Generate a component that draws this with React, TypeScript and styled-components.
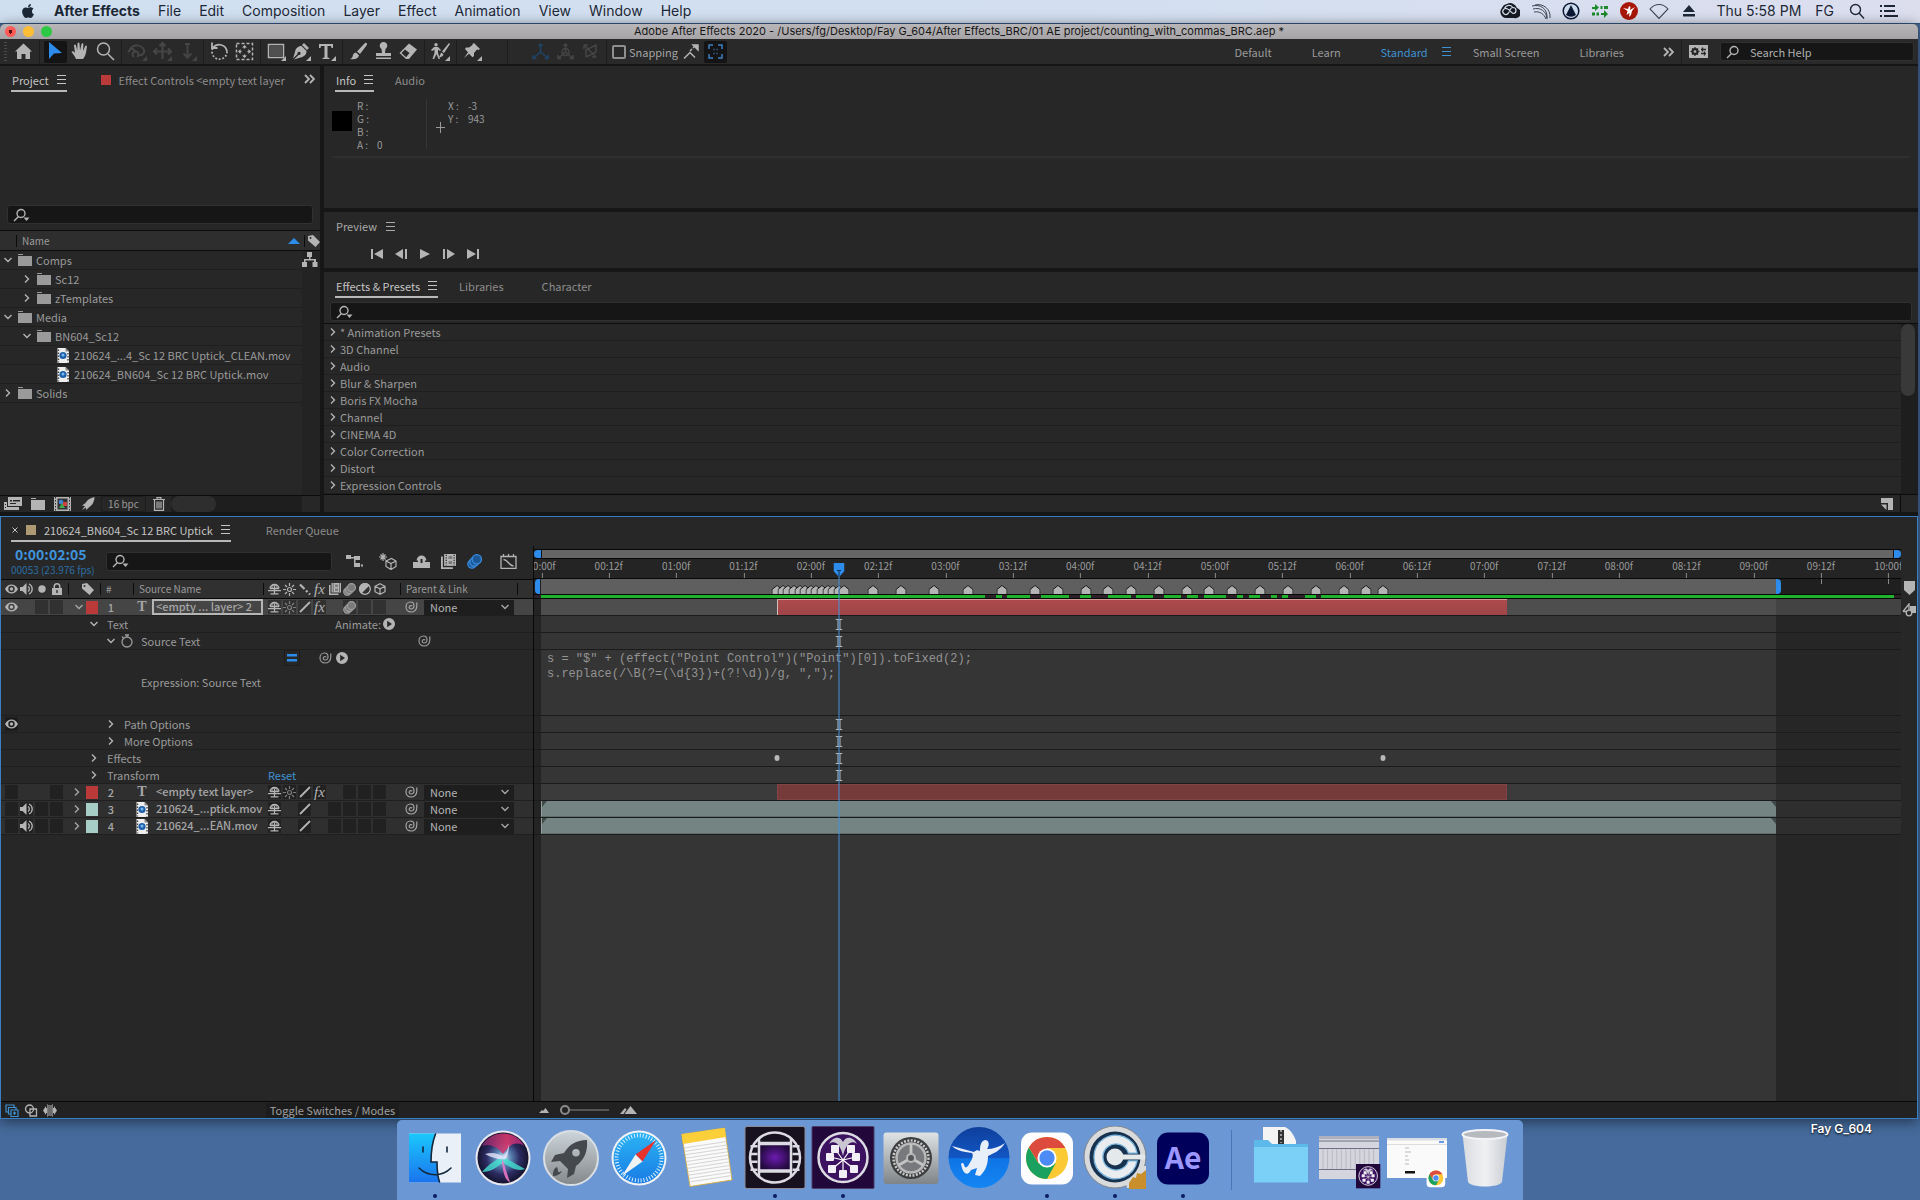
import React from "react";
import styled, { createGlobalStyle, css } from "styled-components";
import { FaApple } from "react-icons/fa";

/* ---------- theme ---------- */
const c = {
  panel: "#272727",
  gap: "#161616",
  line: "#1f1f1f",
  field: "#161616",
  text: "#9a9a9a",
  bright: "#c4c4c4",
  icon: "#b4b4b4",
  dim: "#454545",
  blue: "#2d8ceb",
  link: "#4091d2",
  red: "#b93a38",
};
const uiFont = `"Noto Sans CJK SC", "Noto Sans", sans-serif`;
const macFont = `Inter, Roboto, sans-serif`;

const Global = createGlobalStyle`
  * { box-sizing: border-box; }
  html, body, #root { margin: 0; height: 100%; }
  body { background: #456a9b; overflow: hidden; }
  button, input, select, textarea { font: inherit; color: inherit; margin: 0; padding: 0; border: 0; background: none; outline: none; }
  svg { display: block; flex: none; }
  ul { list-style: none; margin: 0; padding: 0; }
`;

/* ---------- shell ---------- */
const Desktop = styled.div`
  height: 100vh;
  min-height: 900px;
  display: flex;
  flex-direction: column;
  background: #456a9b;
  font: 11px/16px ${uiFont};
  color: ${c.text};
  white-space: nowrap;
`;
const MenuBar = styled.header`
  height: 24px;
  flex: none;
  display: flex;
  align-items: center;
  justify-content: space-between;
  padding: 0 22px 2px 20px;
  background: linear-gradient(90deg, #d0dff0, #d3dff0 60%, #dcdeee);
  border-bottom: 1px solid #33557f;
  color: #1d2836;
  font: 14px/20px ${macFont};
`;
const Menus = styled.nav`
  display: flex;
  align-items: center;
  gap: 18px;
`;
const MenuButton = styled.button<{ $bold?: boolean }>`
  font-weight: ${(p) => (p.$bold ? 700 : 400)};
`;
const StatusItems = styled.div`
  display: flex;
  align-items: center;
  gap: 11px;
`;
const Clock = styled.span`
  margin: 0 3px 0 8px;
`;
const StatusButton = styled.button`
  margin-right: 4px;
`;
const AppWindow = styled.div`
  flex: 1;
  min-height: 0;
  display: flex;
  flex-direction: column;
  margin-right: 2px;
  background: ${c.gap};
  border-radius: 5px 5px 0 0;
  overflow: hidden;
  box-shadow: 0 2px 14px rgba(0, 0, 0, 0.55);
`;
const TitleBar = styled.div`
  height: 15px;
  flex: none;
  display: grid;
  grid-template-columns: 1fr auto 1fr;
  align-items: center;
  padding: 0 5px;
  background: linear-gradient(#b9b6b9, #a5a3a5);
  color: #161616;
  font: 11px/15px ${macFont};
`;
const Lights = styled.div`
  display: flex;
  gap: 7px;
`;
const Light = styled.button<{ $color: string; $dot?: boolean }>`
  width: 11px;
  height: 11px;
  border-radius: 50%;
  background: ${(p) => (p.$dot ? `radial-gradient(circle, #5a0d08 0 2px, ${p.$color} 2px)` : p.$color)};
`;

/* ---------- toolbar ---------- */
const Toolbar = styled.div`
  height: 25px;
  flex: none;
  display: flex;
  align-items: center;
  background: #292929;
  color: ${c.icon};
`;
const Grip = styled.span`
  width: 3px;
  height: 20px;
  margin: 0 4px;
  background: repeating-linear-gradient(#4a4a4a 0 1px, transparent 1px 3px);
`;
const Tool = styled.button<{ $active?: boolean; $off?: boolean }>`
  width: ${(p) => (p.$active ? 23 : 25)}px;
  margin: ${(p) => (p.$active ? "0 1px" : "0")};
  height: 22px;
  display: grid;
  place-items: center;
  border-radius: 2px;
  background: ${(p) => (p.$active ? "#141414" : "transparent")};
  color: ${(p) => (p.$off ? c.dim : "inherit")};
`;
const Split = styled.span<{ $after?: number }>`
  width: 1px;
  height: 24px;
  margin: 0 ${(p) => p.$after ?? 3}px 0 3px;
  background: #1e1e1e;
`;
const AxisTools = styled.div`
  display: flex;
  align-items: center;
  margin-left: 19px;
  color: ${c.dim};
`;
const SnapLabel = styled.label`
  display: flex;
  align-items: center;
  gap: 3px;
  margin: 0 0 0 2px;
  color: #a4a4a4;
`;
const Check = styled.input`
  appearance: none;
  width: 14px;
  height: 14px;
  border: 2px solid #8f8f8f;
  border-radius: 2px;
`;
const Workspaces = styled.nav`
  display: flex;
  align-items: center;
  gap: 40px;
  margin-left: auto;
`;
const Workspace = styled.button<{ $on?: boolean }>`
  color: ${(p) => (p.$on ? c.link : c.text)};
  display: flex;
  align-items: center;
  gap: 14px;
  margin-right: ${(p) => (p.$on ? -18 : 0)}px;
`;
const WorkspaceEnd = styled.div`
  display: flex;
  align-items: center;
  gap: 4px;
  margin: 0 4px 0 39px;
`;
const Field = styled.label<{ $w?: number; $lead?: number }>`
  display: flex;
  align-items: center;
  gap: 7px;
  height: 19px;
  width: ${(p) => (p.$w ? `${p.$w}px` : "auto")};
  margin-left: ${(p) => p.$lead ?? 0}px;
  padding: 0 5px;
  background: ${c.field};
  border: 1px solid #303030;
  border-radius: 3px;
  color: ${c.icon};
  input { flex: 1; min-width: 0; width: 100%; height: 16px; }
  input::placeholder { color: #b0b0b0; opacity: 1; }
`;

/* ---------- upper panels ---------- */
const Upper = styled.div`
  flex: none;
  display: flex;
  gap: 4px;
  padding: 2px 0 4px;
`;
const Panel = styled.section<{ $h?: number }>`
  background: ${c.panel};
  display: flex;
  flex-direction: column;
  ${(p) => p.$h && css`height: ${p.$h}px;`}
`;
const ProjectPanel = styled(Panel)`
  width: 320px;
  flex: none;
`;
const RightStack = styled.div`
  flex: 1;
  min-width: 0;
  display: flex;
  flex-direction: column;
  gap: 4px;
`;
const Tabs = styled.div<{ $gap?: number }>`
  display: flex;
  align-items: flex-start;
  gap: ${(p) => p.$gap ?? 20}px;
  padding: 3px 11px 0;
  height: 28px;
  flex: none;
`;
const Tab = styled.button<{ $on?: boolean; $lead?: number }>`
  display: flex;
  align-items: center;
  gap: 8px;
  height: 23px;
  padding: 0 1px;
  margin-left: ${(p) => p.$lead ?? 0}px;
  color: ${(p) => (p.$on ? c.bright : "#8c8c8c")};
  border-bottom: 2px solid ${(p) => (p.$on ? "#b8b8b8" : "transparent")};
`;
const Swatch = styled.span<{ $color: string; $w?: number; $h?: number }>`
  flex: none;
  width: ${(p) => p.$w ?? 10}px;
  height: ${(p) => p.$h ?? 10}px;
  background: ${(p) => p.$color};
`;
const IconButton = styled.button<{ $lead?: number }>`
  display: grid;
  place-items: center;
  flex: none;
  min-height: 16px;
  color: ${c.icon};
  margin-left: ${(p) => p.$lead ?? 0}px;
`;
const TabOverflow = styled(IconButton)`
  height: 20px;
`;
const ProjectSearch = styled.div`
  padding: 111px 7px 6px;
`;
const ListHead = styled.div`
  height: 21px;
  flex: none;
  display: flex;
  align-items: center;
  border: solid #0c0c0c;
  border-width: 1px 0;
  background: #2e2e2e;
  padding-left: 16px;
  font-size: 10px;
`;
const HeadCell = styled.span`
  flex: 1;
  display: flex;
  align-items: center;
  justify-content: space-between;
  height: 12px;
  border-left: 1px solid #0c0c0c;
  padding: 0 4px 0 5px;
`;
const HeadIcon = styled.span`
  display: flex;
  align-items: center;
  height: 12px;
  border-left: 1px solid #0c0c0c;
  padding-left: 3px;
  color: ${c.icon};
`;
const TreeBody = styled.div`
  flex: 1;
  display: flex;
`;
const Tree = styled.ul`
  flex: 1;
`;
const TreeRow = styled.li<{ $depth: number }>`
  display: flex;
  align-items: center;
  gap: 4px;
  height: 19px;
  padding-left: ${(p) => 2 + p.$depth * 19}px;
  border-bottom: 1px solid ${c.line};
`;
const ChevronSlot = styled.button`
  width: 12px;
  height: 14px;
  flex: none;
  display: grid;
  place-items: center;
  color: ${c.icon};
`;
const TreeSide = styled.div`
  width: 18px;
  background: #232323;
  color: ${c.icon};
`;
const ProjectFoot = styled.div`
  display: flex;
  align-items: center;
  height: 17px;
  border-top: 1px solid #0c0c0c;
  color: ${c.icon};
`;
const FootTool = styled.button`
  width: 25px;
  height: 16px;
  display: grid;
  place-items: center;
`;
const Depth = styled.button`
  width: 45px;
  height: 16px;
  border: 1px solid #1d1d1d;
  border-radius: 2px;
  margin-left: 1px;
  font-size: 10px;
  line-height: 14px;
  color: ${c.text};
`;
const HScroll = styled.div`
  flex: 1;
  margin-right: 18px;
  height: 16px;
  background: #1e1e1e;
`;
const HThumb = styled.div`
  width: 45px;
  height: 16px;
  border-radius: 8px;
  background: #2e2e2e;
`;

const InfoBody = styled.div`
  display: flex;
  height: 64px;
  margin: 0 8px;
  border-bottom: 2px solid #2f2f2f;
  padding-top: 5px;
  font-size: 10px;
`;
const InfoList = styled.dl`
  margin: 0;
  display: grid;
  grid-template-columns: 20px auto;
  grid-auto-rows: 13px;
  align-content: start;
  line-height: 13px;
  dt, dd { margin: 0; }
`;
const Channels = styled.div`
  display: flex;
  gap: 5px;
  width: 95px;
  height: 50px;
  border-right: 1px solid #363636;
`;
const ColorBox = styled.span`
  width: 20px;
  height: 20px;
  margin-top: 12px;
  background: #000;
`;
const Cross = styled.span`
  padding: 23px 3px 0 9px;
`;
const PreviewTitle = styled.div`
  display: flex;
  align-items: center;
  gap: 9px;
  height: 20px;
  margin: 4px 0 0 12px;
  color: #aaa;
`;
const Transport = styled.div`
  display: flex;
  padding: 7px 0 0 41px;
  button { width: 24px; height: 22px; }
`;
const FxSearch = styled.div`
  padding: 2px 6px 2px;
`;
const FxBody = styled.div`
  display: flex;
  height: 172px;
  border: solid #0c0c0c;
  border-width: 1px 0;
`;
const FxList = styled.ul`
  flex: 1;
`;
const FxRow = styled.li`
  display: flex;
  align-items: center;
  gap: 1px;
  height: 17px;
  padding-left: 3px;
  border-bottom: 1px solid ${c.line};
`;
const VScroll = styled.div`
  width: 17px;
  background: #1e1e1e;
`;
const VThumb = styled.div`
  width: 14px;
  height: 72px;
  border-radius: 7px;
  background: #393939;
`;
const FxFoot = styled.div`
  display: flex;
  justify-content: flex-end;
  align-items: center;
  height: 17px;
  margin-right: 17px;
  padding-right: 7px;
  border-right: 1px solid #0c0c0c;
  color: ${c.icon};
`;

/* ---------- timeline ---------- */
const Timeline = styled.section`
  flex: 1;
  min-height: 0;
  display: flex;
  flex-direction: column;
  background: ${c.panel};
  border: 1px solid #3a7fc4;
`;
const TimelineTabs = styled(Tabs)`
  gap: 34px;
  height: 29px;
  padding: 2px 10px 0;
`;
const TimelineBody = styled.div`
  flex: 1;
  min-height: 0;
  display: flex;
`;
const Outline = styled.div`
  width: 533px;
  flex: none;
  border-right: 1px solid #080808;
`;
const Controls = styled.div`
  display: flex;
  align-items: center;
  height: 33px;
  padding: 0 0 3px 10px;
  color: ${c.icon};
`;
const Timecode = styled.div`
  width: 95px;
  line-height: 14px;
  font-size: 10px;
  color: #2b6ea5;
  b { display: block; padding-left: 4px; font-size: 14px; line-height: 17px; color: #3f94dd; font-weight: 700; }
`;
const ControlTools = styled.div`
  display: flex;
  align-items: center;
  gap: 11px;
  margin-left: 14px;
`;
const OutlineHead = styled.div`
  display: flex;
  align-items: center;
  height: 20px;
  padding-left: 4px;
  border: solid #080808;
  border-width: 1px 0;
  background: #303030;
  color: ${c.icon};
  font-size: 10px;
`;
const OutlineCell = styled.div<{ $w: number; $pad?: number }>`
  display: flex;
  align-items: center;
  width: ${(p) => p.$w}px;
  height: 12px;
  padding-left: ${(p) => p.$pad ?? 5}px;
  border-left: 1px solid #0c0c0c;
  color: ${c.text};
`;
const Cells = styled.div`
  display: grid;
  grid-auto-flow: column;
  grid-auto-columns: 13px;
  column-gap: 2px;
  align-items: center;
`;
const AvCells = styled(Cells)<{ $w?: number }>`
  width: ${(p) => p.$w ?? 63}px;
  flex: none;
`;
const CellBox = styled.button<{ $box?: boolean }>`
  width: 13px;
  height: 14px;
  display: grid;
  place-items: center;
  overflow: visible;
  color: ${c.icon};
  background: ${(p) => (p.$box ? "rgba(0,0,0,.28)" : "transparent")};
`;
const LayerRow = styled.div<{ $selected?: boolean }>`
  display: grid;
  grid-template-columns: 60px 20px 14px 24px 29px 112px 124px 36px 90px;
  align-items: center;
  height: 17px;
  padding-left: 4px;
  border-bottom: 1px solid ${c.line};
  background: ${(p) => (p.$selected ? "#454545" : "#2f2f2f")};
  color: #a6a6a6;
  font-weight: 500;
`;
const Slot = styled.div<{ $end?: number; $center?: boolean; $start?: number }>`
  display: flex;
  align-items: center;
  justify-content: ${(p) => (p.$end !== undefined ? "flex-end" : p.$center ? "center" : "flex-start")};
  padding-right: ${(p) => p.$end ?? 0}px;
  padding-left: ${(p) => p.$start ?? 0}px;
`;
const LayerName = styled.span<{ $boxed?: boolean }>`
  height: 16px;
  line-height: 15px;
  padding: 0 4px;
  margin-right: 1px;
  box-shadow: ${(p) => (p.$boxed ? "inset 0 0 0 2px #b5b5b5" : "none")};
`;
const ParentPick = styled.label`
  position: relative;
  display: block;
  height: 15px;
  background: #1e1e1e;
  font-weight: 400;
  svg { position: absolute; right: 4px; top: 3px; pointer-events: none; }
  select { display: block; appearance: none; width: 100%; height: 14px; padding-left: 6px; line-height: 14px; color: #b4b4b4; }
`;
const PropRow = styled.div`
  display: flex;
  align-items: center;
  height: 17px;
  padding-left: 4px;
  border-bottom: 1px solid ${c.line};
`;
const PropName = styled.div<{ $depth: number }>`
  display: flex;
  align-items: center;
  gap: 3px;
  flex: none;
  width: 203px;
  padding-left: ${(p) => 6 + p.$depth * 17}px;
  span { margin-left: 4px; }
`;
const PropValues = styled.div<{ $end?: boolean }>`
  display: flex;
  align-items: center;
  gap: 1px;
  width: 128px;
  margin-right: 20px;
  justify-content: ${(p) => (p.$end ? "flex-end" : "flex-start")};
`;
const Reset = styled.button`
  color: ${c.link};
`;
const ExprBlock = styled.div`
  height: 66px;
  border-bottom: 1px solid ${c.line};
  padding-left: 140px;
`;
const ExprTools = styled.div`
  display: flex;
  align-items: center;
  gap: 2px;
  height: 16px;
  padding-left: 143px;
  margin-bottom: 8px;
`;
const EqualButton = styled.button`
  width: 16px;
  height: 16px;
  display: grid;
  place-items: center;
  border: 1px solid #1d1d1d;
  margin-right: 15px;
  color: ${c.blue};
`;

const Tracks = styled.div`
  position: relative;
  flex: 1;
  min-width: 0;
  display: flex;
  flex-direction: column;
  overflow: hidden;
`;
const NavBar = styled.div`
  height: 10px;
  margin-top: 3px;
  display: flex;
  border: solid #080808;
  border-width: 1px 0;
`;
const NavFill = styled.div`
  flex: 1;
  background: #666;
  border: solid #111;
  border-width: 0 1px;
`;
const NavCap = styled.button<{ $right?: boolean }>`
  width: 7px;
  background: ${c.blue};
  border-radius: ${(p) => (p.$right ? "0 6px 6px 0" : "6px 0 0 6px")};
`;
const Ruler = styled.div`
  position: relative;
  height: 19px;
  overflow: hidden;
  background: #242424;
`;
const Tick = styled.span`
  position: absolute;
  top: 0;
  height: 19px;
  font-size: 10px;
  line-height: 14px;
  transform: translateX(-50%);
  &::after { content: ""; position: absolute; left: 50%; top: 14px; width: 1px; height: 5px; background: #8a8a8a; }
`;
const Work = styled.div`
  position: relative;
  height: 17px;
  background: #1f1f1f;
  border: solid #080808;
  border-width: 1px 0;
`;
const WorkFill = styled.div`
  position: absolute;
  top: 0;
  bottom: 0;
  background: #5f5f5f;
`;
const WorkHandle = styled.button<{ $right?: boolean }>`
  position: absolute;
  top: 0;
  width: 5px;
  height: 15px;
  background: ${c.blue};
  border-radius: ${(p) => (p.$right ? "0 4px 4px 0" : "4px 0 0 4px")};
  transform: ${(p) => (p.$right ? "none" : "translateX(-6px)")};
`;
const LateTick = styled.span`
  position: absolute;
  top: 0;
  width: 1px;
  height: 5px;
  background: #8a8a8a;
`;
const MarkerPin = styled.svg`
  position: absolute;
  bottom: 0;
  transform: translateX(-50%);
`;
const Cache = styled.div`
  position: relative;
  height: 4px;
  background: #2b2228;
  border-bottom: 1px solid #080808;
`;
const CacheRun = styled.div`
  position: absolute;
  top: 0;
  height: 3px;
  background: #20b22d;
`;
const tone = (inside: string, outside: string) =>
  `linear-gradient(90deg, #242424 ${at(0)}, ${inside} ${at(0)} ${at(220)}, ${outside} ${at(220)})`;
const TrackArea = styled.div`
  flex: 1;
  background: ${() => tone("#353535", "#262626")};
`;
const TrackRow = styled.div<{ $h?: number; $kind?: "selected" | "layer" }>`
  position: relative;
  height: ${(p) => p.$h ?? 17}px;
  border-bottom: 1px solid #1b1b1b;
  ${(p) => p.$kind === "selected" && css`background: ${tone("#4e4e4e", "#434343")};`}
  ${(p) => p.$kind === "layer" && css`background: ${tone("#3b3b3b", "#2e2e2e")};`}
`;
const Clip = styled.div<{ $kind: string }>`
  position: absolute;
  top: 0;
  height: 16px;
  ${(p) => p.$kind === "hot" && css`background: linear-gradient(#ad4b4d, #9f4447); border-top: 1px solid #cf9a98; border-left: 1px solid #d0c0bc;`}
  ${(p) => p.$kind === "red" && css`background: #753a3a; border: 1px solid #824443;`}
  ${(p) => p.$kind === "aqua" && css`background: #748482; border-bottom: 1px solid #5f6d6b; display: flex; justify-content: space-between; border-left: 1px solid #8fa09d;`}
`;
const KeyDot = styled.span`
  position: absolute;
  top: 5px;
  width: 5px;
  height: 6px;
  border-radius: 50%;
  background: #b8b8b8;
  transform: translateX(-50%);
`;
const IBeam = styled.svg`
  position: absolute;
  top: 3px;
  transform: translateX(-50%);
  color: #b8b8b8;
`;
const Expression = styled.textarea`
  display: block;
  width: 100%;
  height: 60px;
  padding: 2px 0 0 13px;
  font: 12px/15px "Liberation Mono", monospace;
  color: #939393;
  resize: none;
  overflow: hidden;
`;
const Playhead = styled.div`
  position: absolute;
  top: 17px;
  bottom: 0;
  width: 11px;
  display: flex;
  flex-direction: column;
  align-items: center;
  transform: translateX(-50%);
  pointer-events: none;
  &::after { content: ""; flex: 1; width: 1px; background: #4291dd; }
`;
const Gutter = styled.div`
  width: 16px;
  flex: none;
  display: flex;
  flex-direction: column;
  align-items: center;
  gap: 8px;
  padding-top: 35px;
  color: ${c.icon};
`;
const TimelineFoot = styled.div`
  display: flex;
  align-items: center;
  height: 17px;
  flex: none;
  border-top: 1px solid #080808;
  background: #222;
  color: ${c.icon};
`;
const FootModes = styled.div`
  display: flex;
  gap: 5px;
  width: 265px;
  padding-left: 4px;
`;
const ToggleModes = styled.button`
  width: 133px;
  height: 15px;
  line-height: 15px;
  background: #1c1c1c;
  border-radius: 2px;
  color: #a0a0a0;
  margin-right: 140px;
`;
const ZoomRow = styled.div`
  display: flex;
  align-items: center;
  gap: 11px;
`;
const Zoom = styled.input`
  appearance: none;
  width: 49px;
  height: 12px;
  background: linear-gradient(#555, #555) center / 100% 2px no-repeat;
  &::-webkit-slider-thumb { appearance: none; width: 10px; height: 10px; border-radius: 50%; border: 2px solid #8a8a8a; background: #222; }
`;

/* ---------- dock ---------- */
const DockArea = styled.footer`
  position: relative;
  height: 81px;
  flex: none;
  display: flex;
  justify-content: center;
  padding-top: 1px;
`;
const Dock = styled.div`
  display: flex;
  padding: 0 4px;
  background: #6b97d5;
  border-radius: 5px 5px 0 0;
`;
const DockItem = styled.button<{ $running?: boolean }>`
  width: 68px;
  display: flex;
  flex-direction: column;
  align-items: center;
  gap: 4px;
  padding-top: 6px;
  &::after { content: ""; width: 4px; height: 4px; border-radius: 50%; background: ${(p) => (p.$running ? "#0b1c60" : "transparent")}; }
`;
const DockLine = styled.span`
  width: 1px;
  height: 60px;
  margin: 10px 15px 0 14px;
  background: #4a76b5;
`;
const DriveLabel = styled.span`
  position: absolute;
  right: 48px;
  top: 2px;
  color: #fff;
  font: 600 12px/16px ${macFont};
  text-shadow: 0 1px 2px #000;
`;

/* ---------- icons ---------- */
type P = { d: string; w?: number; h?: number; sw?: number; fill?: boolean; color?: string; children?: React.ReactNode };
const Glyph = ({ d, w = 16, h = 16, sw = 1.4, fill, color, children }: P) => (
  <svg width={w} height={h} viewBox={`0 0 ${w} ${h}`} fill={fill ? "currentColor" : "none"} stroke={fill ? "none" : "currentColor"} strokeWidth={sw} color={color}>
    <path d={d} fillRule="evenodd" />
    {children}
  </svg>
);
const MenuLines = () => <Glyph w={9} h={9} sw={1} d="M0 .5h9M0 4.5h9M0 8.5h9" />;
const Chevrons = () => <Glyph w={11} h={10} sw={1.8} d="M1 1l4 4-4 4M6 1l4 4-4 4" />;
const Chevron = ({ open }: { open?: boolean }) =>
  open ? <Glyph w={10} h={8} sw={1.4} d="M1.5 2l3.500 3.500L8.500 2" /> : <Glyph w={8} h={10} sw={1.4} d="M2 1.500l3.500 3.500L2 8.500" />;
const SearchGlyph = ({ menu }: { menu?: boolean }) => (
  <Glyph w={17} h={14} sw={1.4} d="M5.500 8.500L1 13">
    <circle cx="8" cy="5.500" r="4" />
    {menu && <path d="M10.500 9.500h6L13.500 13z" fill="currentColor" stroke="none" />}
  </Glyph>
);
const Folder = () => <Glyph w={14} h={12} fill d="M0 0h5v1H0zM0 2h14v10H0z" />;
const Movie = () => (
  <svg width="14" height="15" viewBox="0 0 14 15">
    <path d="M1.500 0h8l3.500 3.500V15h-11.500z" fill="#eee" />
    <path d="M9.500 0l3.500 3.500H9.500z" fill="#888" />
    <path d="M2.500 1.500v13M12 5v9.500" stroke="#444" strokeWidth="1.400" strokeDasharray="1.500 1.500" />
    <circle cx="7" cy="7.500" r="3.600" fill="#1c5faa" />
    <circle cx="7" cy="7" r="1.500" fill="#7db7ea" />
  </svg>
);
const Eye = () => (
  <Glyph w={13} h={10} fill d="M0 5C2 1.500 4 .5 6.500.5S11 1.500 13 5C11 8.500 9 9.500 6.500 9.500S2 8.500 0 5zM6.500 1.800a3.200 3.200 0 1 0 0 6.400 3.200 3.200 0 0 0 0-6.400z">
    <circle cx="6.500" cy="5" r="1.700" />
  </Glyph>
);
const Speaker = () => (
  <Glyph w={13} h={12} fill d="M0 4h2.500L6.500 0v12L2.500 8H0z">
    <path d="M8 3.500a3 3 0 0 1 0 5M9 1a5.500 5.500 0 0 1 0 10" fill="none" stroke="currentColor" strokeWidth="1.300" />
  </Glyph>
);
const Lock = () => <Glyph w={10} h={12} fill d="M0 5h1.500V3.500a3.500 3.500 0 0 1 7 0V5H10v7H0zM3 5h4V3.500a2 2 0 0 0-4 0zM4.300 7v3h1.400V7z" />;
const Tag = () => <Glyph w={12} h={12} fill color={c.icon} d="M0 1l5-1 7 7-4.500 5L0 5.500zM2.500 2a1 1 0 1 0 0 2 1 1 0 0 0 0-2z" />;
const Shy = () => (
  <svg width="13" height="12" viewBox="0 0 13 12" fill="none" stroke="currentColor" strokeWidth="1.300">
    <path d="M2 5.500a4.500 4 0 0 1 9 0M2 5.500h9M0 7.600h13M6.500 2.500v5M2.500 10.800h8M6.500 7.500v3.500" />
    <path d="M4 5.500V3.200a3 3 0 0 1 5 0v2.300" strokeWidth="1" />
  </svg>
);
const Sun = ({ dim }: { dim?: boolean }) => (
  <Glyph w={13} h={13} sw={1.200} color={dim ? "#7d7d7d" : undefined} d="M6.500 0v3M6.500 10v3M0 6.500h3M10 6.500h3M2 2l2 2M9 9l2 2M11 2L9 4M4 9l-2 2"><circle cx="6.500" cy="6.500" r="2" /></Glyph>
);
const Slash = () => <Glyph w={12} h={12} sw={1.800} d="M1 11L11 1" />;
const Quality = () => <Glyph w={12} h={12} sw={2.200} d="M1 1.500l4.500 4.500M7 7.500l1.500 1.500M10 10.500l1 1" />;
const FxGlyph = styled.i`
  font: italic 15px/14px "Liberation Serif", serif;
  color: ${c.icon};
`;
const FrameBlend = ({ s = 12 }: { s?: number }) => (
  <svg width={s} height={s} viewBox="0 0 12 12" color={c.icon}><path d="M0 2h1.500v8.500h8V12H0z" fill="currentColor" /><path d="M2.500 0h9.500v9.500H2.500z" fill="currentColor" /><path d="M4.200.5v8.500M10.500.5v8.500" stroke="#2b2b2b" strokeDasharray="1 1" /><path d="M6 1.500h3v2.500H6zM6 5.500h3v2.500H6z" fill="#2b2b2b" opacity=".4" /></svg>
);
const MotionBlur = ({ s = 13, color = "#a0a0a0", fill = "#7b7b7b" }) => (
  <svg width={s} height={s} viewBox="0 0 13 13" fill={fill} stroke={color} strokeWidth="1.100"><circle cx="4.300" cy="8.700" r="3.600" /><circle cx="6.300" cy="6.800" r="3.800" /><circle cx="8.500" cy="4.600" r="4" /></svg>
);
const Adjust = () => <Glyph w={12} h={12} sw={1.300} color={c.icon} d="M6 .7a5.300 5.300 0 1 0 0 10.600A5.300 5.300 0 1 0 6 .7z"><path d="M9.800 2.200A5.300 5.300 0 0 0 2.200 9.800z" fill="currentColor" /></Glyph>;
const Cube = ({ s = 12 }: { s?: number }) => (
  <svg width={s} height={s} viewBox="0 0 12 12" fill="none" stroke={c.icon} strokeWidth="1.200"><path d="M6 .7l5 2.600v5.400L6 11.300 1 8.700V3.300zM1 3.300l5 2.600 5-2.600M6 5.900v5.400" /></svg>
);
const Whip = () => <Glyph w={16} h={14} sw={1.200} d="M9.200 6.200a1.700 1.700 0 1 0-1.200 2.800c2.200 0 3-1.500 3-3.200C11 3.500 9.500 2 7.500 2 4.800 2 3 4.200 3 7s2 5 5 5c3.500 0 5.800-2.500 5.800-6V2.500" />;
const PlayDot = () => <Glyph w={14} h={14} fill d="M7 1a6 6 0 1 0 0 12A6 6 0 0 0 7 1zM5.200 3.800L10 7l-4.800 3.200z" />;
const TextGlyph = styled.b`
  width: 14px;
  text-align: center;
  font: 700 14px/14px "Liberation Serif", serif;
`;
const Stopwatch = () => <Glyph w={14} h={14} sw={1.300} d="M5 1h4M7 1v2M2 2.500l1.500 1.500"><circle cx="7" cy="8" r="5" /></Glyph>;
const T = (p: Omit<P, "w" | "h"> & { tri?: boolean }) => (
  <svg width="21" height="21" viewBox="0 0 21 21" fill={p.fill ? "currentColor" : "none"} stroke={p.fill ? "none" : "currentColor"} strokeWidth={p.sw ?? 1.5} color={p.color}>
    <path d={p.d} fillRule="evenodd" />
    {p.children}
    {p.tri && <path d="M20 15v5h-5z" fill="currentColor" stroke="none" />}
  </svg>
);
const axisPath = "M10.500 11V3M10.500 11l-7 6M10.500 11l7 6M8.500 5l2-2 2 2M3 14v3.500h3.500M18 14v3.500h-3.500";

/* ---------- timeline data ---------- */
/* frame number -> share of the track's width */
function at(frame: number) {
  return `${(0.5417 + frame * 0.41054).toFixed(3)}%`;
}
const span = (a: number, b: number) => ({ left: at(a), width: `${((b - a) * 0.41054).toFixed(3)}%` });
const ticks = Array.from({ length: 21 }, (_, i) => ({ f: i * 12, t: `${String(Math.floor(i / 2)).padStart(2, "0")}:${i % 2 ? "12" : "00"}f` }));
const markers = [...Array.from({ length: 13 }, (_, i) => 42 + i), 59, 64, 70, 76, 82, 88, 92, 97, 101, 105, 110, 115, 119, 123, 128, 133, 138, 143, 147, 150];
const cached = [[0, 79], [81, 82], [83, 87], [89, 94], [96, 98], [101, 105], [106, 109], [111, 114], [115, 117], [118, 122], [124, 125], [126, 128], [130, 131], [132, 133], [136, 138], [139, 241]];
const NOW = 53;

const layers = [
  { n: 2, name: "<empty text layer>", kind: "text", sun: true, fx: true },
  { n: 3, name: "210624_...ptick.mov", kind: "movie" },
  { n: 4, name: "210624_...EAN.mov", kind: "movie" },
];
const tree: [number, string, "open" | "closed" | "file"][] = [
  [0, "Comps", "open"],
  [1, "Sc12", "closed"],
  [1, "zTemplates", "closed"],
  [0, "Media", "open"],
  [1, "BN604_Sc12", "open"],
  [2, "210624_...4_Sc 12 BRC Uptick_CLEAN.mov", "file"],
  [2, "210624_BN604_Sc 12 BRC Uptick.mov", "file"],
  [0, "Solids", "closed"],
];
const effects = ["* Animation Presets", "3D Channel", "Audio", "Blur & Sharpen", "Boris FX Mocha", "Channel", "CINEMA 4D", "Color Correction", "Distort", "Expression Controls"];
const menus = ["After Effects", "File", "Edit", "Composition", "Layer", "Effect", "Animation", "View", "Window", "Help"];

/* ---------- parts ---------- */
const TopMenu = () => (
  <MenuBar>
    <Menus>
      <MenuButton aria-label="Apple menu"><FaApple size={16} /></MenuButton>
      {menus.map((m, i) => <MenuButton key={m} $bold={i === 0}>{m}</MenuButton>)}
    </Menus>
    <StatusItems>
      <svg width="20" height="18" viewBox="0 0 20 18"><path d="M7 2a7 7 0 0 1 10 4 5 5 0 0 1-3 10H6A6 6 0 0 1 2 6a6 6 0 0 1 5-4z" fill="#151a22" /><path d="M9.500 9.500l-1.500 2a3 3 0 1 1-.5-4.500c1.500 0 3.500 3.500 5.500 4.500a3 3 0 1 0 0-6c-1.500 0-2.500 1-3 2.500M4.500 6c2-3 6-3.500 8-1" fill="none" stroke="#d5e0ef" strokeWidth="1.200" /></svg>
      <svg width="20" height="18" viewBox="0 0 20 18" fill="none" stroke="#3d4652" strokeWidth="1"><path d="M1 4C9 2 17 6 16 17M2 7c7-2 13 2 14 9M4 3c8-2 16 4 15 13M3 10c6-1 10 2 12 7" /></svg>
      <svg width="18" height="18" viewBox="0 0 18 18"><circle cx="9" cy="9" r="7.800" fill="#cfdcee" stroke="#0b1833" strokeWidth="1.500" /><path d="M9 3l5 10a9 9 0 0 1-10 0z" fill="#0b1833" /></svg>
      <svg width="18" height="14" viewBox="0 0 18 14" fill="#1c8a2a"><path d="M1 3h3V0l4 3.500L4 7V5H1zM10 9h3V6l4 4-4 4v-3h-3zM9.500 2h2v3h-2zM13 2h4v3h-4zM1 8.500h3v3H1zM5.500 8.500h2.500v3H5.500z" /></svg>
      <svg width="18" height="18" viewBox="0 0 18 18"><circle cx="9" cy="9" r="9" fill="#a81608" /><path d="M3 6l5 1 1-3 1.500 1L10 8l5-3-3 4-1 4-2 2 .5-4-3 2 1-4z" fill="#fff" /></svg>
      <svg width="20" height="16" viewBox="0 0 20 16" fill="none" stroke="#3d4652" strokeWidth="1.100"><path d="M1 6c5-6 13-6 18 0l-9 9.500z" /></svg>
      <svg width="18" height="12" viewBox="0 0 18 12" fill="#1d2836"><path d="M9 0l6 7H3zM3 9h12v2.500H3z" /></svg>
      <Clock>Thu 5:58 PM</Clock>
      <StatusButton>FG</StatusButton>
      <StatusButton aria-label="Spotlight"><svg width="16" height="16" viewBox="0 0 16 16" fill="none" stroke="#1d2836" strokeWidth="1.400"><circle cx="6.500" cy="6.500" r="5" /><path d="M10 10l5 5.500" /></svg></StatusButton>
      <MenuButton aria-label="Notifications"><svg width="18" height="12" viewBox="0 0 18 12" stroke="#1d2836" strokeWidth="1.800"><path d="M0 1h2M4 1h11M0 6h2M4 6h11M0 11h2M4 11h14" /></svg></MenuButton>
    </StatusItems>
  </MenuBar>
);

const MainToolbar = () => (
  <Toolbar>
    <Grip />
    <Tool aria-label="Home"><T fill d="M10.500 2.500L2 10.500h2V18h4.500v-5h4v5H17v-7.500h2z" /></Tool>
    <Split />
    <Tool $active aria-label="Selection"><T fill color={c.blue} d="M4 1v17l5-5.500 8-.5z" /></Tool>
    <Tool aria-label="Hand"><T fill d="M6 18c-1-3-3-5-4.500-7 1-1.300 2.200-.6 3.500 1L4 4.500C4.300 3.200 5.700 3.300 6 4.500l1.200 5L7.500 2.500c.4-1.300 1.800-1.300 2 0l.5 7L11.500 3c.4-1.200 1.900-1 1.900.3L13 10l2.200-5c.6-1.100 1.900-.6 1.700.7C16.300 9 16.500 14 13 18z" /></Tool>
    <Tool aria-label="Zoom"><T d="M13 13l6 6"><circle cx="8.500" cy="8" r="6" /></T></Tool>
    <Split />
    <Tool $off aria-label="Orbit"><T sw={2} tri d="M3 8c4-5 11-5 14 1 1 4-3 6-6 5M1 11l4-4 4 4M7 16a3 3 0 1 1 3 0" /></Tool>
    <Tool $off aria-label="Pan camera"><T sw={2.200} tri d="M10.500 4v14M4 10.500h13M7.500 5l3-3 3 3M5 7.500l-3 3 3 3M16 7.500l3 3-3 3" /></Tool>
    <Tool $off aria-label="Dolly"><T sw={2} tri d="M10.500 3v13M6.500 12.500l4 4 4-4M8 3h5" /></Tool>
    <Split />
    <Tool aria-label="Rotate"><T sw={1.800} d="M4 6.500A8 8 0 0 1 18 10.500M3 1.500v5.500h5.500"><path d="M18 10.500a7.500 7.500 0 1 1-14.500-2.500" strokeDasharray="1.800 1.800" /></T></Tool>
    <Tool aria-label="Pan behind"><T sw={1.500} d="M10.500 5.500v2M10.500 13.500v2M5.500 10.500h2M13.500 10.500h2"><rect x="2.500" y="2.500" width="16" height="16" strokeDasharray="3 2" /><path d="M8 6.500l2.500-2.500L13 6.500zM8 14.500l2.500 2.500 2.500-2.500zM6.500 8L4 10.500 6.500 13zM14.500 8l2.500 2.500-2.500 2.500z" fill="currentColor" stroke="none" /></T></Tool>
    <Split />
    <Tool aria-label="Rectangle"><T tri d="M2.500 3.500h15v13h-15z"><rect x="4" y="5" width="12" height="10" fill="#505050" stroke="none" /></T></Tool>
    <Tool aria-label="Pen"><T fill tri d="M13 2l5 5-2 2-5-5zM10.500 5l5 5c0 4-3 6-6 6.500L3 18.500l4.500-4.600a1.600 1.600 0 1 0-1-1L2 17.500l2-6.500c.5-3.500 3-6 6.500-6z" /></Tool>
    <Tool aria-label="Type"><T fill tri d="M3 3h14v4h-1.500L15 5h-3.500v11.500l2 .5v1h-7v-1l2-.5V5H5L4.500 7H3z" /></Tool>
    <Split />
    <Tool aria-label="Brush"><T fill d="M18.500 2c1 .5.500 1.500 0 2.500L12 13l-3-2.500 7.500-8c.7-.6 1.400-.8 2-.5zM8 11.500l3 2.800c-.5 3.500-4.500 4.700-9 3.700 2-.5 2.500-2 3-4 .5-1.500 1.500-2.500 3-2.500z" /></Tool>
    <Tool aria-label="Clone stamp"><T fill d="M8.500 8a3.800 3.800 0 1 1 4 0l-.5 4h6v3H3v-3h6zM3 16.500h15V18H3z" /></Tool>
    <Tool aria-label="Eraser"><T fill d="M11 2.500l8 6L11 18H8l-6.500-6zM3.500 12l4.500 4.200 3.500-4.200-4.500-3.500z" /></Tool>
    <Split />
    <Tool aria-label="Roto brush"><T fill tri d="M6 2a1.700 1.700 0 1 1 0 3.500A1.700 1.700 0 0 1 6 2zM4 6h4l3 3-1 1-2-1.500V12l2 6H8.500L6.500 13 4 18H2.500l2-6V8.500L2 10 1 9zM19 2l1 1-6 9-2-1.500zM11.500 11.500l2 2c-1 2.500-3 3-5 2.500 2-1 1.500-3.500 3-4.500z" /></Tool>
    <Split />
    <Tool aria-label="Puppet pin"><T fill tri d="M12 2l6 6-1.500 1-1.500-.5-3 3.500v3l-1.500 1.200-3.500-3.500L2 17l4-5.700L3 8l1-1.500h3L10.500 4 10.500 3z" /></Tool>
    <AxisTools>
      <Split $after={20} />
      <Tool $off aria-label="Local axis"><T color="#1f4468" d={axisPath} /></Tool>
      <Tool $off aria-label="World axis"><T d={axisPath}><circle cx="10.500" cy="11" r="3.500" /></T></Tool>
      <Tool $off aria-label="View axis"><T d="M4 4l12 12M4 4v4M4 4h4M6 16V9l10-5v7L6 16M16 16h-4" /></Tool>
      <Split />
    </AxisTools>
    <SnapLabel><Check type="checkbox" />Snapping</SnapLabel>
    <Tool aria-label="Snap edges"><T d="M4 17.500l6-6 5 5M10 10l2-2M13 7l1-1"><path d="M13 4h5v5z" fill="currentColor" /></T></Tool>
    <Tool $active aria-label="Snap features"><T color="#3f7fc0" sw={1.500} d="M4 8V4h4M13 4h4v4M17 13v4h-4M8 17H4v-4M8.500 8.500h1M11.500 8.500h1M8.500 12.500h1M11.500 12.500h1" /></Tool>
    <Workspaces aria-label="Workspaces">
      <Workspace>Default</Workspace>
      <Workspace>Learn</Workspace>
      <Workspace $on>Standard<MenuLines /></Workspace>
      <Workspace>Small Screen</Workspace>
      <Workspace>Libraries</Workspace>
    </Workspaces>
    <WorkspaceEnd>
      <IconButton aria-label="More workspaces"><Chevrons /></IconButton>
      <Split />
      <IconButton aria-label="Workspace settings"><svg width="19" height="13" viewBox="0 0 19 13"><path d="M0 0h19v13H0z" fill="#b4b4b4" /><circle cx="6" cy="6.500" r="2.600" fill="none" stroke="#262626" strokeWidth="2" /><path d="M6 2v9M1.500 6.500h9M3 3.500l6 6M9 3.500l-6 6" stroke="#262626" strokeWidth="1.200" /><circle cx="6" cy="6.500" r="1.300" fill="#b4b4b4" /><path d="M12 4.500h5M12 8.500h5M13.500 2.500v4M15.500 6.500v4" stroke="#262626" strokeWidth="1.300" /></svg></IconButton>
      <Field $w={194} $lead={8}><SearchGlyph /><input aria-label="Search Help" placeholder="Search Help" /></Field>
    </WorkspaceEnd>
  </Toolbar>
);

const Project = () => (
  <ProjectPanel>
    <Tabs $gap={18}>
      <Tab $on>Project<MenuLines /></Tab>
      <Tab $lead={15}><Swatch $color={c.red} />Effect Controls &lt;empty text layer</Tab>
      <TabOverflow aria-label="More tabs"><Chevrons /></TabOverflow>
    </Tabs>
    <ProjectSearch><Field><SearchGlyph menu /><input aria-label="Search project" /></Field></ProjectSearch>
    <ListHead>
      <HeadCell>Name<svg width="12" height="6" viewBox="0 0 12 6"><path d="M6 0l6 6H0z" fill={c.blue} /></svg></HeadCell>
      <HeadIcon><Tag /></HeadIcon>
    </ListHead>
    <TreeBody>
      <Tree>
        {tree.map(([depth, name, kind]) => (
          <TreeRow key={name} $depth={depth}>
            {kind === "file" ? <ChevronSlot as="span" /> : <ChevronSlot aria-label={name}><Chevron open={kind === "open"} /></ChevronSlot>}
            {kind === "file" ? <Movie /> : <Folder />}
            {name}
          </TreeRow>
        ))}
      </Tree>
      <TreeSide><Glyph w={16} h={17} fill d="M5 1h5v5H8.500v2H14v3h1.500v5h-5v-5H12V9.500H3.500V11H5v5H0v-5h2V8h5V6H5z" /></TreeSide>
    </TreeBody>
    <ProjectFoot>
      <FootTool aria-label="Interpret footage"><Glyph w={18} h={14} fill d="M4 0h14v9H4zM6 3v1.500h2V3zM9 3v1.500h7V3zM6 6v1h6V6zM0 5h3v5h12v3H0zM1 7v1h1V7zM1 10v1h1v-1z" /></FootTool>
      <FootTool aria-label="New folder"><Folder /></FootTool>
      <FootTool aria-label="New composition"><svg width="17" height="14" viewBox="0 0 17 14"><path d="M0 0h17v14H0z" fill="#b4b4b4" /><path d="M1.500 0v14M15.500 0v14" stroke="#333" strokeDasharray="1.500 1.500" /><path d="M3.500 1.500h10v11h-10z" fill="#333" /><circle cx="7" cy="5" r="2.300" fill="#3c82d6" /><path d="M9 5h4v4H9z" fill="#d0443c" /><path d="M5 11l3-5 3 5z" fill="#41a84a" /></svg></FootTool>
      <FootTool aria-label="Adjust"><Glyph w={14} h={14} fill d="M13.500 0C9 1 6 3 4.500 6L1 8.500 4 9l-3 4 4-2.500V13l4-3.500C11.500 8 13.500 4 13.500 0z" /></FootTool>
      <Depth>16 bpc</Depth>
      <FootTool aria-label="Delete"><Glyph w={12} h={14} sw={1.200} d="M0 2.500h12M4 2V.6h4V2M1.500 3v10.300h9V3M4 4.500v7M6 4.500v7M8 4.500v7" /></FootTool>
      <HScroll><HThumb /></HScroll>
    </ProjectFoot>
  </ProjectPanel>
);

const Info = () => (
  <Panel $h={142}>
    <Tabs><Tab $on>Info<MenuLines /></Tab><Tab>Audio</Tab></Tabs>
    <InfoBody>
      <Channels>
        <ColorBox />
        <InfoList><dt>R :</dt><dd /><dt>G :</dt><dd /><dt>B :</dt><dd /><dt>A :</dt><dd>0</dd></InfoList>
      </Channels>
      <Cross><Glyph w={9} h={11} sw={1} d="M4.500 0v11M0 5.500h9" /></Cross>
      <InfoList><dt>X :</dt><dd>-3</dd><dt>Y :</dt><dd>943</dd></InfoList>
    </InfoBody>
  </Panel>
);

const Preview = () => (
  <Panel $h={56}>
    <PreviewTitle>Preview<MenuLines /></PreviewTitle>
    <Transport>
      <IconButton aria-label="First frame"><Glyph w={12} h={10} fill d="M0 0h2v10H0zM12 0v10L3 5z" /></IconButton>
      <IconButton aria-label="Previous frame"><Glyph w={12} h={10} fill d="M8 0v10L0 5zM10 0h2v10h-2z" /></IconButton>
      <IconButton aria-label="Play"><Glyph w={10} h={10} fill d="M0 0l10 5-10 5z" /></IconButton>
      <IconButton aria-label="Next frame"><Glyph w={12} h={10} fill d="M0 0h2v10H0zM4 0l8 5-8 5z" /></IconButton>
      <IconButton aria-label="Last frame"><Glyph w={12} h={10} fill d="M0 0l9 5-9 5zM10 0h2v10h-2z" /></IconButton>
    </Transport>
  </Panel>
);

const Effects = () => (
  <Panel>
    <Tabs><Tab $on>Effects &amp; Presets<MenuLines /></Tab><Tab>Libraries</Tab><Tab $lead={16}>Character</Tab></Tabs>
    <FxSearch><Field><SearchGlyph menu /><input aria-label="Search effects" /></Field></FxSearch>
    <FxBody>
      <FxList>{effects.map((e) => <FxRow key={e}><ChevronSlot aria-label={e}><Chevron /></ChevronSlot>{e}</FxRow>)}</FxList>
      <VScroll><VThumb /></VScroll>
    </FxBody>
    <FxFoot><Glyph w={12} h={12} fill d="M0 0h12v12H7V5H0zM0 6.500h5.500V12z" /></FxFoot>
  </Panel>
);

const Parent = ({ n }: { n: number }) => (
  <>
    <Slot $end={5}><Whip /></Slot>
    <ParentPick><select aria-label={`Parent of layer ${n}`} defaultValue="None"><option>None</option></select><Chevron open /></ParentPick>
  </>
);

const Property = ({ name, depth, open, eye, watch, children }: { name: string; depth: number; open?: boolean; eye?: boolean; watch?: boolean; children?: React.ReactNode }) => (
  <PropRow>
    <AvCells $w={60}>{eye && <CellBox $box aria-label={`Show ${name}`}><Eye /></CellBox>}</AvCells>
    <PropName $depth={depth}>
      <ChevronSlot aria-label={name}><Chevron open={open} /></ChevronSlot>
      {watch && <Stopwatch />}
      <span>{name}</span>
    </PropName>
    {children}
  </PropRow>
);

const OutlineColumn = () => (
  <Outline>
    <Controls>
      <Timecode><b>0:00:02:05</b>00053 (23.976 fps)</Timecode>
      <Field $w={226}><SearchGlyph menu /><input aria-label="Search layers" /></Field>
      <ControlTools>
        <IconButton aria-label="Mini-flowchart"><Glyph w={17} h={14} fill d="M0 1h5v2h3V2h6v4H9.500v3H14v4H8V4.500H5V5H0zM14.500 10.500h3l-1.500 3z" /></IconButton>
        <IconButton $lead={5} aria-label="Draft 3D"><Glyph w={18} h={17} sw={1.200} d="M7 8l5.500-2.500L17 8v5.500l-5 3-5-3V8l5 2.500L17 8M12 10.500v6M4 0v8M0 4h8M1.500 1.500l5 5M6.500 1.500l-5 5" /></IconButton>
        <IconButton $lead={5} aria-label="Hide shy layers"><Glyph w={17} h={13} fill d="M0 7h5V5.500H3.500C4 2 6 .5 8.500.5S13 2 13.500 5.500H12V7h5v6H0zM7.500 4v4h2V4z" /></IconButton>
        <IconButton aria-label="Frame blending"><FrameBlend s={15} /></IconButton>
        <IconButton aria-label="Motion blur"><MotionBlur s={15} color="#3a8de0" fill="#1c5896" /></IconButton>
        <IconButton $lead={7} aria-label="Graph editor"><Glyph w={17} h={15} sw={1.300} d="M1 2.500h15v12H1zM3.500 0v2.500M8.500 0v2.500M13.500 0v2.500M3.500 5.500c5 0 5 6.500 10 6.500" /></IconButton>
      </ControlTools>
    </Controls>
    <OutlineHead>
      <AvCells>
        <CellBox as="span"><Eye /></CellBox>
        <CellBox as="span"><Speaker /></CellBox>
        <CellBox as="span"><svg width="8" height="8"><circle cx="4" cy="4" r="3.700" fill={c.icon} /></svg></CellBox>
        <CellBox as="span"><Lock /></CellBox>
      </AvCells>
      <OutlineCell $w={32} $pad={13}><Tag /></OutlineCell>
      <OutlineCell $w={33}>#</OutlineCell>
      <OutlineCell $w={130}>Source Name</OutlineCell>
      <OutlineCell $w={137} $pad={4}>
        <Cells>
          <CellBox as="span"><Shy /></CellBox><CellBox as="span"><Sun /></CellBox><CellBox as="span"><Quality /></CellBox>
          <CellBox as="span"><FxGlyph>fx</FxGlyph></CellBox><CellBox as="span"><FrameBlend /></CellBox><CellBox as="span"><MotionBlur /></CellBox>
          <CellBox as="span"><Adjust /></CellBox><CellBox as="span"><Cube /></CellBox>
        </Cells>
      </OutlineCell>
      <OutlineCell $w={117}>Parent &amp; Link</OutlineCell>
      <OutlineCell $w={10} />
    </OutlineHead>

    <LayerRow $selected>
      <Cells><CellBox aria-label="Visible"><Eye /></CellBox><CellBox aria-label="Audio" /><CellBox $box aria-label="Solo" /><CellBox $box aria-label="Lock" /></Cells>
      <Slot $end={1}><Chevron open /></Slot>
      <Slot $start={1}><Swatch $color={c.red} $w={12} $h={13} /></Slot>
      <Slot $center>1</Slot>
      <Slot $end={3}><TextGlyph>T</TextGlyph></Slot>
      <LayerName $boxed>&lt;empty ... layer&gt; 2</LayerName>
      <Slot $start={4}>
        <Cells>
          <CellBox $box><Shy /></CellBox><CellBox $box><Sun dim /></CellBox><CellBox $box><Slash /></CellBox><CellBox $box><FxGlyph>fx</FxGlyph></CellBox>
          <CellBox /><CellBox $box><MotionBlur /></CellBox><CellBox $box /><CellBox $box />
        </Cells>
      </Slot>
      <Parent n={1} />
    </LayerRow>
    <Property name="Text" depth={1} open>
      <PropValues $end>Animate:<IconButton aria-label="Animate menu"><PlayDot /></IconButton></PropValues>
    </Property>
    <Property name="Source Text" depth={2} open watch><PropValues /><Whip /></Property>
    <ExprBlock>
      <ExprTools>
        <EqualButton aria-label="Enable expression"><Glyph w={10} h={8} fill d="M0 0h10v2.500H0zM0 5h10v2.500H0z" /></EqualButton>
        <Whip /><IconButton aria-label="Expression language menu"><PlayDot /></IconButton>
      </ExprTools>
      Expression: Source Text
    </ExprBlock>
    <Property name="Path Options" depth={2} eye />
    <Property name="More Options" depth={2} />
    <Property name="Effects" depth={1} />
    <Property name="Transform" depth={1}><Reset>Reset</Reset></Property>
    {layers.map((l) => (
      <LayerRow key={l.n}>
        <Cells>
          <CellBox $box /><CellBox $box={l.kind === "movie"}>{l.kind === "movie" && <Speaker />}</CellBox>
          <CellBox $box={l.kind === "movie"} /><CellBox $box />
        </Cells>
        <Slot $end={4}><Chevron /></Slot>
        <Slot $start={1}><Swatch $color={l.kind === "text" ? c.red : "#a6cdc6"} $w={12} $h={13} /></Slot>
        <Slot $center>{l.n}</Slot>
        <Slot $end={3}>{l.kind === "text" ? <TextGlyph>T</TextGlyph> : <Movie />}</Slot>
        <LayerName>{l.name}</LayerName>
        <Slot $start={4}>
          <Cells>
            <CellBox $box><Shy /></CellBox><CellBox $box={l.sun}>{l.sun && <Sun dim />}</CellBox><CellBox $box><Slash /></CellBox>
            <CellBox $box={l.fx}>{l.fx && <FxGlyph>fx</FxGlyph>}</CellBox><CellBox $box={!l.fx} /><CellBox $box /><CellBox $box /><CellBox $box />
          </Cells>
        </Slot>
        <Parent n={l.n} />
      </LayerRow>
    ))}
  </Outline>
);

const Beam = () => <IBeam width="7" height="11" viewBox="0 0 7 11" fill="none" stroke="currentColor" strokeWidth="1" style={{ left: at(NOW) }}><path d="M0 .5h7M0 10.500h7M2.500.5v10M4.500.5v10" /></IBeam>;

const TrackColumn = () => (
  <Tracks>
    <NavBar><NavCap aria-label="Navigator start" /><NavFill /><NavCap $right aria-label="Navigator end" /></NavBar>
    <Ruler>{ticks.map((t) => <Tick key={t.f} style={{ left: at(t.f) }}>{t.t}</Tick>)}</Ruler>
    <Work>
      <WorkFill style={span(0, 220)} />
      <WorkHandle aria-label="Work area start" style={{ left: at(0) }} />
      <WorkHandle $right aria-label="Work area end" style={{ left: at(220) }} />
      {ticks.filter((t) => t.f > 220).map((t) => <LateTick key={t.f} style={{ left: at(t.f) }} />)}
      {markers.map((m) => (
        <MarkerPin key={m} width="11" height="9" viewBox="0 0 11 9" style={{ left: at(m) }}>
          <path d="M.5 9.500V4.500L5.500.5l5 4v5z" fill="#b4b4b4" stroke="#1c1c1c" />
        </MarkerPin>
      ))}
    </Work>
    <Cache>{cached.map(([a, b]) => <CacheRun key={a} style={span(a, b)} />)}</Cache>
    <TrackArea>
      <TrackRow $kind="selected"><Clip $kind="hot" style={span(42, 172)} /></TrackRow>
      <TrackRow><Beam /></TrackRow>
      <TrackRow><Beam /></TrackRow>
      <TrackRow $h={66}>
        <Expression aria-label="Expression" spellCheck={false} defaultValue={'s = "$" + (effect("Point Control")("Point")[0]).toFixed(2);\ns.replace(/\\B(?=(\\d{3})+(?!\\d))/g, ",");'} />
      </TrackRow>
      <TrackRow><Beam /></TrackRow>
      <TrackRow><Beam /></TrackRow>
      <TrackRow><KeyDot style={{ left: at(42) }} /><KeyDot style={{ left: at(150) }} /><Beam /></TrackRow>
      <TrackRow><Beam /></TrackRow>
      <TrackRow $kind="layer"><Clip $kind="red" style={span(42, 172)} /></TrackRow>
      {[3, 4].map((n) => (
        <TrackRow key={n} $kind="layer">
          <Clip $kind="aqua" style={span(0, 220)}>
            <svg width="5" height="6" viewBox="0 0 5 6"><path d="M0 0h5L0 6z" fill="#3f4a48" /></svg>
            <svg width="5" height="6" viewBox="0 0 5 6"><path d="M0 0h5v6z" fill="#3f4a48" /></svg>
          </Clip>
        </TrackRow>
      ))}
    </TrackArea>
    <Playhead style={{ left: at(NOW) }}>
      <svg width="11" height="13" viewBox="0 0 11 13"><path d="M0 0h11v8l-4.500 5h-2L0 8z" fill={c.blue} /><path d="M3.500 7.500h4M5.500 7.500v5.500" stroke="#12324f" fill="none" /></svg>
    </Playhead>
  </Tracks>
);

const TimelinePanel = () => (
  <Timeline>
    <TimelineTabs>
      <Tab $on>
        <Glyph w={6} h={6} sw={1} d="M.5.5l5 5M5.500.5l-5 5" /><Swatch $color="#ad9a75" />210624_BN604_Sc 12 BRC Uptick<MenuLines />
      </Tab>
      <Tab>Render Queue</Tab>
    </TimelineTabs>
    <TimelineBody>
      <OutlineColumn />
      <TrackColumn />
      <Gutter>
        <Glyph w={11} h={14} fill d="M0 0h11v9l-5.500 5L0 9z" />
        <Glyph w={14} h={14} sw={1.300} d="M1 8.500L7 1v6M1 8.500h4"><path d="M8 3h6v7H8z" fill="currentColor" stroke="none" /><circle cx="7" cy="10" r="2.800" fill="#272727" /></Glyph>
      </Gutter>
    </TimelineBody>
    <TimelineFoot>
      <FootModes>
        <IconButton aria-label="Layer switches"><Glyph w={14} h={13} sw={1.200} color={c.link} d="M9 4V1H1v7h3M11 6V3.500H3.500V10H6M6 6h7v6.500H6zM9.500 7.500v3.500M8 9.200h3" /></IconButton>
        <IconButton aria-label="Transfer controls"><Glyph w={14} h={13} sw={1.300} d="M6 5h6.500v7H6z"><circle cx="5.500" cy="5" r="4" /></Glyph></IconButton>
        <IconButton aria-label="In and out columns"><Glyph w={14} h={13} fill d="M4.500 0v13H4V9H3v2L0 6.500 3 2v2h1V0zM10 0v4h1V2l3 4.500L11 11V9h-1v4h-.5V0z"><path d="M4.500 1h5v11h-5z" opacity=".5" /></Glyph></IconButton>
      </FootModes>
      <ToggleModes>Toggle Switches / Modes</ToggleModes>
      <ZoomRow>
        <Glyph w={10} h={5} fill d="M0 5l3-3 1 1L6.500 0 10 5z" />
        <Zoom type="range" aria-label="Zoom" min={0} max={100} defaultValue={0} />
        <Glyph w={17} h={8} fill d="M0 8l5-6 1.500 1.500L3.500 8zM4.500 8L10.500 0 17 8z" />
      </ZoomRow>
    </TimelineFoot>
  </Timeline>
);

/* ---------- dock drawings ---------- */
const D = ({ children }: { children: React.ReactNode }) => <svg width="64" height="64" viewBox="0 0 64 64">{children}</svg>;
const range = (n: number) => Array.from({ length: n }, (_, i) => i);

const Flower = () => (
  <>
    <circle cx="32" cy="31.500" r="24.500" fill="#3c1160" stroke="#dcdae2" strokeWidth="2.500" />
    <path d="M18 18c3-7 11-9 14-2 3-7 11-5 14 2-5-4-11-1-14 12-3-13-9-16-14-12z" fill="#c9c6d2" />
    {[[24, 23], [40, 23], [19, 31], [45, 31], [21, 43], [43, 43], [32, 48]].map(([x, y]) => (
      <g key={`${x}-${y}`}><path d={`M32 34L${x} ${y}`} stroke="#fff" strokeWidth="1.200" /><rect x={x - 4} y={y - 4} width="8" height="8" rx="1" fill="#f1eff5" /></g>
    ))}
  </>
);
const Chrome = ({ r = 22 }: { r?: number }) => (
  <g transform={`translate(32 32) scale(${r / 22})`}>
    <circle r="22" fill="#fbc934" />
    <path d="M0-10.500h19.300A22 22 0 0 0-19.050-11L-9 5z" fill="#dd4b3e" />
    <path d="M-19.050-11A22 22 0 0 0 0 22L9 5.500-9 5.500z" fill="#1aa15f" />
    <circle r="10" fill="#fff" /><circle r="8" fill="#4c8bf5" />
  </g>
);

const dockApps: [string, boolean, React.ReactNode][] = [
  ["Finder", true, <D key="i">
    <defs><linearGradient id="fb" x1="0" x2="0" y1="0" y2="1"><stop offset="0" stopColor="#1ac8fc" /><stop offset="1" stopColor="#1a74ee" /></linearGradient></defs>
    <path d="M6 7.500h52v49H6z" fill="#e9f0f8" /><path d="M6 7.500h26.500C29 17 28 26 28 36h6c0 7 .5 14 2.500 20.500H6z" fill="url(#fb)" />
    <path d="M20 21v5M44 21v5M16 42c9 9 23 9 32 0M32.500 8C29 17 28 26 28 36h6c0 7 .5 14 2.500 20" fill="none" stroke="#13283c" strokeWidth="1.600" strokeLinecap="round" />
  </D>],
  ["Siri", false, <D key="i">
    <defs>
      <radialGradient id="si"><stop offset="0" stopColor="#dff6ff" /><stop offset=".3" stopColor="#5b86b5" /><stop offset=".65" stopColor="#2c2c63" /><stop offset="1" stopColor="#14132e" /></radialGradient>
      <linearGradient id="sk"><stop offset="0" stopColor="#7d2a72" /><stop offset=".6" stopColor="#e23a6d" /><stop offset="1" stopColor="#a82a86" /></linearGradient>
    </defs>
    <circle cx="32" cy="32" r="27.500" fill="#e8e8ee" /><circle cx="32" cy="32" r="25.500" fill="url(#si)" />
    <path d="M11 20c8-16 34-17 42 0-8-5-14-2-21 8-6-7-12-11-21-8z" fill="url(#sk)" opacity=".85" />
    <path d="M11 46c7-8 13-12 21-15 8 4 14 8 22 12-9 3-16-2-22-7-6 6-13 10-21 10z" fill="#43e0cf" opacity=".8" />
    <path d="M31 32c3 8 5 16 8 24-5-1-8-12-8-24z" fill="#f07ac8" opacity=".85" /><path d="M14 28c7-2 13-1 18 3 3-4 5-8 6-13 0 6-1 11-3 15-7 1-14-1-21-5z" fill="#e7e2fb" opacity=".8" />
  </D>],
  ["Launchpad", false, <D key="i">
    <defs><linearGradient id="lp" x1="0" x2="0" y1="0" y2="1"><stop offset="0" stopColor="#ccd5da" /><stop offset="1" stopColor="#84888b" /></linearGradient></defs>
    <circle cx="32" cy="32" r="27" fill="url(#lp)" stroke="#dadfe3" strokeWidth="2" />
    <path d="M48 14c-11 0-18 5-23 13l-9 2-4 7 9-1 8 8-1 9 7-4 2-8c8-6 12-14 11-26zM37 23a3.800 3.800 0 1 1 0 7.600A3.800 3.800 0 0 1 37 23zM18 41c-4 2-4 6-4 9 3 0 7-1 9-5-2 1-3 1-4 1 0-1 0-3-1-5z" fill="#45484c" fillRule="evenodd" />
  </D>],
  ["Safari", false, <D key="i">
    <defs><linearGradient id="sf" x1="0" x2="0" y1="0" y2="1"><stop offset="0" stopColor="#2ab4f5" /><stop offset="1" stopColor="#1a7be4" /></linearGradient></defs>
    <circle cx="32" cy="32" r="27.500" fill="#f1f3f5" /><circle cx="32" cy="32" r="25.500" fill="url(#sf)" />
    <circle cx="32" cy="32" r="22.500" fill="none" stroke="#d7efff" strokeWidth="4" strokeDasharray="1 1.950" />
    <path d="M49 14L35.500 35.500l-7-7z" fill="#e8322c" /><path d="M15 50l13.500-21.500 7 7z" fill="#f2f2f2" />
  </D>],
  ["Notes", false, <D key="i">
    <path d="M6.700 8.300L49.600 2l7.400 52-42 6.500z" fill="#fafafa" stroke="#d5a92b" strokeWidth=".8" /><path d="M6.700 8.300L49.600 2l1.300 9L8 18z" fill="#fbcf3a" />
    {range(11).map((i) => <path key={i} d={`M${9 + i * 0.55} ${22 + i * 3.4}l42-6.400`} stroke="#cfcfcf" strokeWidth=".9" />)}
  </D>],
  ["Recorder", true, <D key="i">
    <defs><radialGradient id="rc"><stop offset="0" stopColor="#6d1bb0" /><stop offset="1" stopColor="#220a3c" /></radialGradient></defs>
    <rect x="2" y=".5" width="60" height="62" rx="2" fill="#17101f" stroke="#8e8b99" /><rect x="15" y="18" width="34" height="27" fill="url(#rc)" />
    <circle cx="32" cy="31.500" r="25" fill="none" stroke="#dcdae2" strokeWidth="2.500" /><path d="M16 17.500h32M16 45h32" stroke="#dcdae2" strokeWidth="3.500" />
    <path d="M16 12v39M48 12v39" stroke="#dcdae2" strokeWidth="2.500" />
    <path d="M11 19v26M53 19v26" stroke="#dcdae2" strokeWidth="7" strokeDasharray="2.500 5.300" />
  </D>],
  ["Media Tool", true, <D key="i"><rect x="1" y=".5" width="62" height="62" rx="1" fill="#22073a" stroke="#4d3d66" /><Flower /></D>],
  ["System Preferences", false, <D key="i">
    <defs><linearGradient id="sp" x1="0" x2="0" y1="0" y2="1"><stop offset="0" stopColor="#dfe3e4" /><stop offset="1" stopColor="#7f8488" /></linearGradient></defs>
    <rect x="4.500" y="6.500" width="55" height="51.500" rx="3" fill="url(#sp)" /><circle cx="32" cy="32" r="21" fill="#3c3d3f" />
    <circle cx="32" cy="32" r="17.500" fill="none" stroke="#c9c9c9" strokeWidth="2.500" strokeDasharray="2 1.400" /><circle cx="32" cy="32" r="14.500" fill="#77797c" stroke="#b9b9b9" strokeWidth="2.500" />
    <path d="M32 32V18M32 32l-12 7M32 32l12 7" stroke="#c4c4c4" strokeWidth="2.800" /><circle cx="32" cy="32" r="4" fill="#55575a" stroke="#b9b9b9" strokeWidth="2" />
  </D>],
  ["Swift Transfer", false, <D key="i">
    <defs><linearGradient id="bd" x1="0" x2="0" y1="0" y2="1"><stop offset="0" stopColor="#0e3f9c" /><stop offset=".5" stopColor="#1256c4" /><stop offset=".52" stopColor="#0f74e4" /><stop offset="1" stopColor="#1486f4" /></linearGradient></defs>
    <circle cx="32" cy="31.500" r="30.500" fill="url(#bd)" />
    <path d="M5 20l22 6c2-2 4-2 6-1 0-3 0-10 5-11 4 0 5 5 2 9 6 0 12-2 18-6-5 8-11 10-17 13 0 8-2 14-8 20l-5-1 2-7-6 2c-3 6-8 5-10-6 1-2 3-1 3 1 1 3 2 3 4 1l4-7c1-3 1-5 0-6C16 26 9 24 5 20z" fill="#e9eff8" />
  </D>],
  ["Chrome", true, <D key="i"><rect x="6" y="6.500" width="52" height="52" rx="11" fill="#fdfdfd" /><Chrome r={21} /></D>],
  ["Capture", true, <D key="i">
    <circle cx="32" cy="31" r="31" fill="#d9dadb" stroke="#80868c" strokeWidth="1" /><path d="M40 40h23v22H44z" fill="#d9dadb" />
    <circle cx="32" cy="31" r="25.500" fill="#17324f" />
    <path d="M50 26.500h7a25 25 0 1 0 0 9H47a15 15 0 1 1 0-9z" fill="#e9edf0" stroke="#7fb8de" strokeWidth="1.500" transform="translate(4.500 4) scale(.87)" />
    <circle cx="32" cy="31" r="8.500" fill="#e4e9ec" /><path d="M33 28.500h29v5H33z" fill="#e4e9ec" /><path d="M46 57l4-6 3 1 1-5 4 1 5-4v19H46z" fill="#c98f2c" />
  </D>],
  ["After Effects", true, <D key="i"><rect x="6" y="6.500" width="52" height="52" rx="11" fill="#00005b" /><text x="32" y="43" textAnchor="middle" fill="#9b97ff" fontFamily="Noto Sans CJK SC, sans-serif" fontWeight="700" fontSize="30">Ae</text></D>],
];
const dockFiles: [string, React.ReactNode][] = [
  ["Documents", <D key="i"><path d="M14 1h22c5 2 9 8 11 14v10H14z" fill="#f4f4f4" /><path d="M29 4h6v16h-6z" fill="#333" /><path d="M32 4v13" stroke="#999" strokeWidth="2" strokeDasharray="2 2" /><path d="M5 14h14l4 4h36v38H5z" fill="#5db9ea" /><path d="M5 21h54v35.500H5z" fill="#7bd0f8" /></D>],
  ["Window one", <D key="i">
    <path d="M2 10h60v43H2z" fill="#d5d5de" /><path d="M2 10h60v3H2z" fill="#aeb0c0" /><path d="M2 15h60M2 22.500h60M2 43.500h60" stroke="#6f7086" />
    {range(12).map((i) => <path key={i} d={`M${6 + i * 4.6} 23v20`} stroke="#b2b2be" strokeWidth=".8" />)}
    <g transform="translate(39 38) scale(.38)"><rect width="64" height="64" fill="#22073a" /><Flower /></g>
  </D>],
  ["Window two", <D key="i">
    <path d="M2 12h60v40H2z" fill="#fafafa" /><path d="M2 12h60v2.500H2z" fill="#d9dde2" /><path d="M2 18.500h60" stroke="#ddd" /><path d="M54 16h5" stroke="#3b78e7" strokeWidth="1.500" />
    <path d="M20 22h4M20 26h6M20 30h3M20 34h4M20 38h4" stroke="#aaa" strokeWidth=".8" /><path d="M20 45h10v2.500H20z" fill="#111" />
    <g transform="translate(41 42) scale(.31)"><rect x="2" y="2" width="60" height="60" rx="12" fill="#fff" /><Chrome r={24} /></g>
  </D>],
  ["Trash", <D key="i">
    <defs><linearGradient id="tr"><stop offset="0" stopColor="#d9dce0" /><stop offset=".5" stopColor="#f0f1f3" /><stop offset="1" stopColor="#c9cdd2" /></linearGradient></defs>
    <path d="M9.500 8l5.500 48c3 6 31 6 34 0l5.500-48z" fill="url(#tr)" /><ellipse cx="32" cy="8.500" rx="22.500" ry="4.500" fill="#b6babf" stroke="#f4f4f6" strokeWidth="2" />
  </D>],
];

const DockBar = () => (
  <DockArea>
    <Dock>
      {dockApps.map(([name, running, art]) => <DockItem key={name} $running={running} aria-label={name}>{art}</DockItem>)}
      <DockLine />
      {dockFiles.map(([name, art]) => <DockItem key={name} aria-label={name}>{art}</DockItem>)}
    </Dock>
    <DriveLabel>Fay G_604</DriveLabel>
  </DockArea>
);

export default function App() {
  return (
    <Desktop>
      <Global />
      <TopMenu />
      <AppWindow>
        <TitleBar>
          <Lights>
            <Light $color="#fc5b57" $dot aria-label="Close" />
            <Light $color="#fdbe35" aria-label="Minimize" />
            <Light $color="#2ec944" aria-label="Zoom window" />
          </Lights>
          <span>Adobe After Effects 2020 - /Users/fg/Desktop/Fay G_604/After Effects_BRC/01 AE project/counting_with_commas_BRC.aep *</span>
        </TitleBar>
        <MainToolbar />
        <Upper>
          <Project />
          <RightStack><Info /><Preview /><Effects /></RightStack>
        </Upper>
        <TimelinePanel />
      </AppWindow>
      <DockBar />
    </Desktop>
  );
}
